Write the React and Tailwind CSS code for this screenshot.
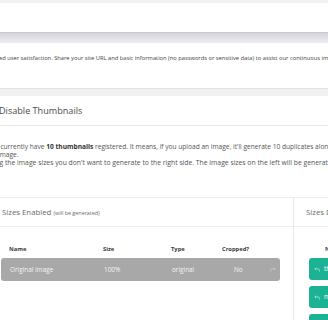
import React from "react";

const ShareIcon = ({ className }) => (
  <svg viewBox="0 0 10 8" className={className} fill="none" stroke="currentColor" strokeWidth="1">
    <path d="M1 7.5 V5 Q1 3 3 3 H8.5" />
    <path d="M6.5 1 L8.5 3 L6.5 5" />
  </svg>
);

const UndoIcon = ({ className }) => (
  <svg viewBox="0 0 10 8" className={className} fill="none" stroke="currentColor" strokeWidth="1">
    <path d="M9 7.5 V5 Q9 3 7 3 H1.5" />
    <path d="M3.5 1 L1.5 3 L3.5 5" />
  </svg>
);

export default function App() {
  const cols = "grid grid-cols-[93px_69px_51px_47px_20px]";

  return (
    <div className="w-[328px] h-[320px] overflow-hidden bg-[#f1f1f1] font-['Open_Sans',sans-serif] text-[#555]">
      <div className="h-[3px] bg-[#f0f0f1]" />
      <div className="h-[29px] bg-white" />
      <div className="h-[11px] bg-gradient-to-b from-[#d4d4dc] to-[#ededf1] border-t border-[#c9c9d2]" />

      {/* notice */}
      <div className="h-[45px] bg-white pt-[11px] overflow-hidden">
        <p className="whitespace-nowrap text-[5.75px] leading-[8px] text-[#444] ml-[-1px]">
          ed user satisfaction. Share your site URL and basic information (no passwords or sensitive data) to assist our continuous improvement.
        </p>
      </div>
      <div className="h-[8px] bg-[#f1f1f1] border-t border-[#e2e2e2]" />

      {/* panel */}
      <div className="bg-white">
        <div className="h-[30px] border-b border-[#e6e6e6] flex items-center">
          <h2 className="text-[9.1px] text-[#4a4a4a] ml-[-1px] whitespace-nowrap">Disable Thumbnails</h2>
        </div>

        <div className="pt-[17px] pb-[30px] text-[6.6px] leading-[8px] text-[#555] whitespace-nowrap overflow-hidden">
          <p className="ml-[-13px]">
            You currently have <b className="text-[#333]">10 thumbnails</b> registered. It means, if you upload an image, it'll generate 10 duplicates along with the
          </p>
          <p className="ml-[-2px]">image.</p>
          <p className="ml-[-12px] text-[6.8px]">
            Drag the image sizes you don't want to generate to the right side. The image sizes on the left will be generated.
          </p>
        </div>

        {/* card */}
        <div className="border-t border-[#eeeeee] flex">
          <div className="w-[294px] shrink-0 border-r border-[#e8e8e8]">
            <div className="h-[29px] border-b border-[#efefef] flex items-center pl-[2px] pt-[1px]">
              <span className="text-[7.8px] text-[#6a6a6a] whitespace-nowrap">
                Sizes Enabled <span className="text-[5.4px]">(will be generated)</span>
              </span>
            </div>
            <div className="pt-[13px] pl-[1px] pr-[13px]">
              <div className={`${cols} h-[18px] items-center text-[5.8px] font-bold text-[#3a3a3a] pl-[8px]`}>
                <span>Name</span>
                <span className="pl-[1px]">Size</span>
                <span>Type</span>
                <span>Cropped?</span>
                <span />
              </div>
              <div className={`${cols} h-[23px] items-center bg-[#a8a8a8] rounded-[3px] text-[6.4px] text-[#f4f4f4] pl-[9px]`}>
                <span>Original Image</span>
                <span className="pl-[1px]">100%</span>
                <span>original</span>
                <span className="pl-[11px]">No</span>
                <ShareIcon className="w-[6px] h-[5px] text-[#d8d8d8]" />
              </div>
              <div className="h-[40px]" />
            </div>
          </div>

          <div className="flex-1 min-w-0 overflow-hidden">
            <div className="h-[29px] border-b border-[#efefef] flex items-center pl-[12px] pt-[1px]">
              <span className="text-[7.8px] text-[#6a6a6a] whitespace-nowrap">Sizes Disabled</span>
            </div>
            <div className="pt-[13px] pl-[15px]">
              <div className="h-[18px] flex items-center text-[5.8px] font-bold text-[#3a3a3a] pl-[16px] whitespace-nowrap">
                Name
              </div>
              <div className="flex flex-col gap-[6px]">
                <div className="h-[22px] w-[40px] bg-[#1bb394] rounded-l-[3px] flex items-center pl-[5px] gap-[4px] text-white text-[6.4px] whitespace-nowrap">
                  <UndoIcon className="w-[6px] h-[5px] shrink-0 text-[#d9f3ec]" />
                  <span>thumbnail</span>
                </div>
                <div className="h-[22px] w-[40px] bg-[#1bb394] rounded-l-[3px] flex items-center pl-[5px] gap-[4px] text-white text-[6.4px] whitespace-nowrap">
                  <UndoIcon className="w-[6px] h-[5px] shrink-0 text-[#d9f3ec]" />
                  <span>medium</span>
                </div>
                <div className="h-[22px] w-[40px] bg-[#1bb394] rounded-l-[3px]" />
              </div>
            </div>
          </div>
        </div>
      </div>
    </div>
  );
}
